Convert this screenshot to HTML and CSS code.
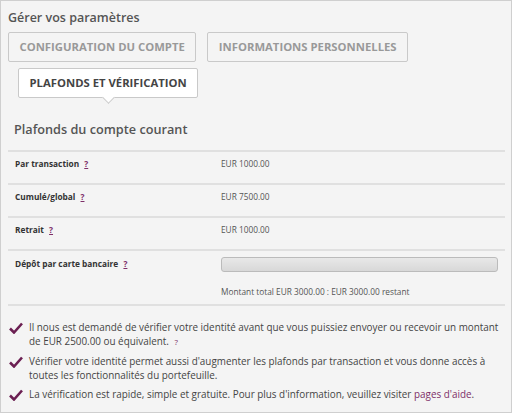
FILE: index.html
```html
<!DOCTYPE html>
<html lang="fr">
<head>
<meta charset="utf-8">
<link rel="stylesheet" href="styles.css">
</head>
<body>
<div class="panel">
  <h2 class="title">Gérer vos paramètres</h2>
  <div class="tabs">
    <span class="tab">CONFIGURATION DU COMPTE</span>
    <span class="tab">INFORMATIONS PERSONNELLES</span>
    <span class="tab active">PLAFONDS ET VÉRIFICATION</span>
  </div>
  <h3 class="subtitle">Plafonds du compte courant</h3>
  <div class="limits">
    <div class="row">
      <div class="label">Par transaction <a class="help">?</a></div>
      <div class="value">EUR 1000.00</div>
    </div>
    <div class="row">
      <div class="label">Cumulé/global <a class="help">?</a></div>
      <div class="value">EUR 7500.00</div>
    </div>
    <div class="row">
      <div class="label">Retrait <a class="help">?</a></div>
      <div class="value">EUR 1000.00</div>
    </div>
    <div class="row deposit">
      <div class="label">Dépôt par carte bancaire <a class="help">?</a></div>
      <div class="value">
        <div class="bar"></div>
        <div class="total">Montant total EUR 3000.00 : EUR 3000.00 restant</div>
      </div>
    </div>
  </div>
  <ul class="checks">
    <li><svg class="tick" viewBox="0 0 14 12"><path d="M1 6.5 L5 10.5 L13 1.5" /></svg><p>Il nous est demandé de vérifier votre identité avant que vous puissiez envoyer ou recevoir un montant de EUR 2500.00 ou équivalent. <a class="q">?</a></p></li>
    <li><svg class="tick" viewBox="0 0 14 12"><path d="M1 6.5 L5 10.5 L13 1.5" /></svg><p>Vérifier votre identité permet aussi d'augmenter les plafonds par transaction et vous donne accès à toutes les fonctionnalités du portefeuille.</p></li>
    <li><svg class="tick" viewBox="0 0 14 12"><path d="M1 6.5 L5 10.5 L13 1.5" /></svg><p>La vérification est rapide, simple et gratuite. Pour plus d'information, veuillez visiter <a class="link">pages d'aide</a>.</p></li>
  </ul>
</div>
</body>
</html>
```

FILE: styles.css
```css
* { box-sizing: border-box; }
html, body { margin: 0; padding: 0; background: #fff; }
body { font-family: "Open Sans", "Noto Sans", sans-serif; color: #444; }
.panel {
  width: 512px;
  height: 413px;
  background: #f4f4f4;
  border: 1px solid #cfcfcf;
  padding: 9px 7px 0 7px;
}
.title {
  margin: 0;
  font-size: 12.5px;
  font-weight: 600;
  color: #555;
  line-height: 16px;
}
.tabs {
  display: flex;
  flex-wrap: wrap;
  column-gap: 11px;
  row-gap: 6px;
  margin-top: 6px;
}
.tab {
  display: inline-block;
  height: 30px;
  line-height: 28px;
  padding: 0 10.5px;
  border: 1px solid #c9c9c9;
  border-radius: 2px;
  font-size: 11.3px;
  font-weight: 700;
  color: #999;
  background: #f4f4f4;
}
.tab.active {
  margin-left: 10px;
  background: #fff;
  color: #444;
  position: relative;
}
.tab.active::after {
  content: "";
  position: absolute;
  left: 50%;
  bottom: -5px;
  width: 8px;
  height: 8px;
  margin-left: -4px;
  background: #fff;
  border-right: 1px solid #c9c9c9;
  border-bottom: 1px solid #c9c9c9;
  transform: rotate(45deg);
}
.subtitle {
  margin: 22px 0 0 6px;
  font-size: 12.7px;
  font-weight: 600;
  color: #555;
  line-height: 18px;
}
.limits { margin-top: 12px; border-top: 2px solid #e0e0e0; width: 497px; }
.row {
  display: flex;
  border-bottom: 2px solid #e0e0e0;
  height: 33px;
  padding-top: 5px;
}
.row.deposit { height: 55px; padding-top: 6px; }
.label {
  width: 213px;
  padding-left: 7px;
  font-size: 8.3px;
  font-weight: 700;
  color: #333;
  line-height: 14px;
}
.value {
  font-size: 8.3px;
  color: #555;
  line-height: 14px;
  flex: 1;
}
.help {
  color: #7d2e68;
  text-decoration: underline;
  margin-left: 3px;
}
.bar {
  width: 277px;
  height: 15px;
  border: 1px solid #bbb;
  border-radius: 3px;
  background: linear-gradient(#e8e8e8, #d8d8d8);
}
.total { margin-top: 13px; }
.checks { list-style: none; margin: 14px 0 0 0; padding: 0; }
.checks li { display: flex; margin-bottom: 5px; }
.checks li:last-child { margin-top: 2px; }
.tick {
  flex: none;
  width: 14px;
  height: 12px;
  margin: 2px 6px 0 1px;
  fill: none;
  stroke: #6b1f52;
  stroke-width: 2.6;
}
.checks p {
  margin: 0;
  font-size: 9.9px;
  line-height: 14px;
  color: #444;
}
.q { color: #7d2e68; font-size: 8px; margin-left: 3px; }
.link { color: #7d2e68; }
```
